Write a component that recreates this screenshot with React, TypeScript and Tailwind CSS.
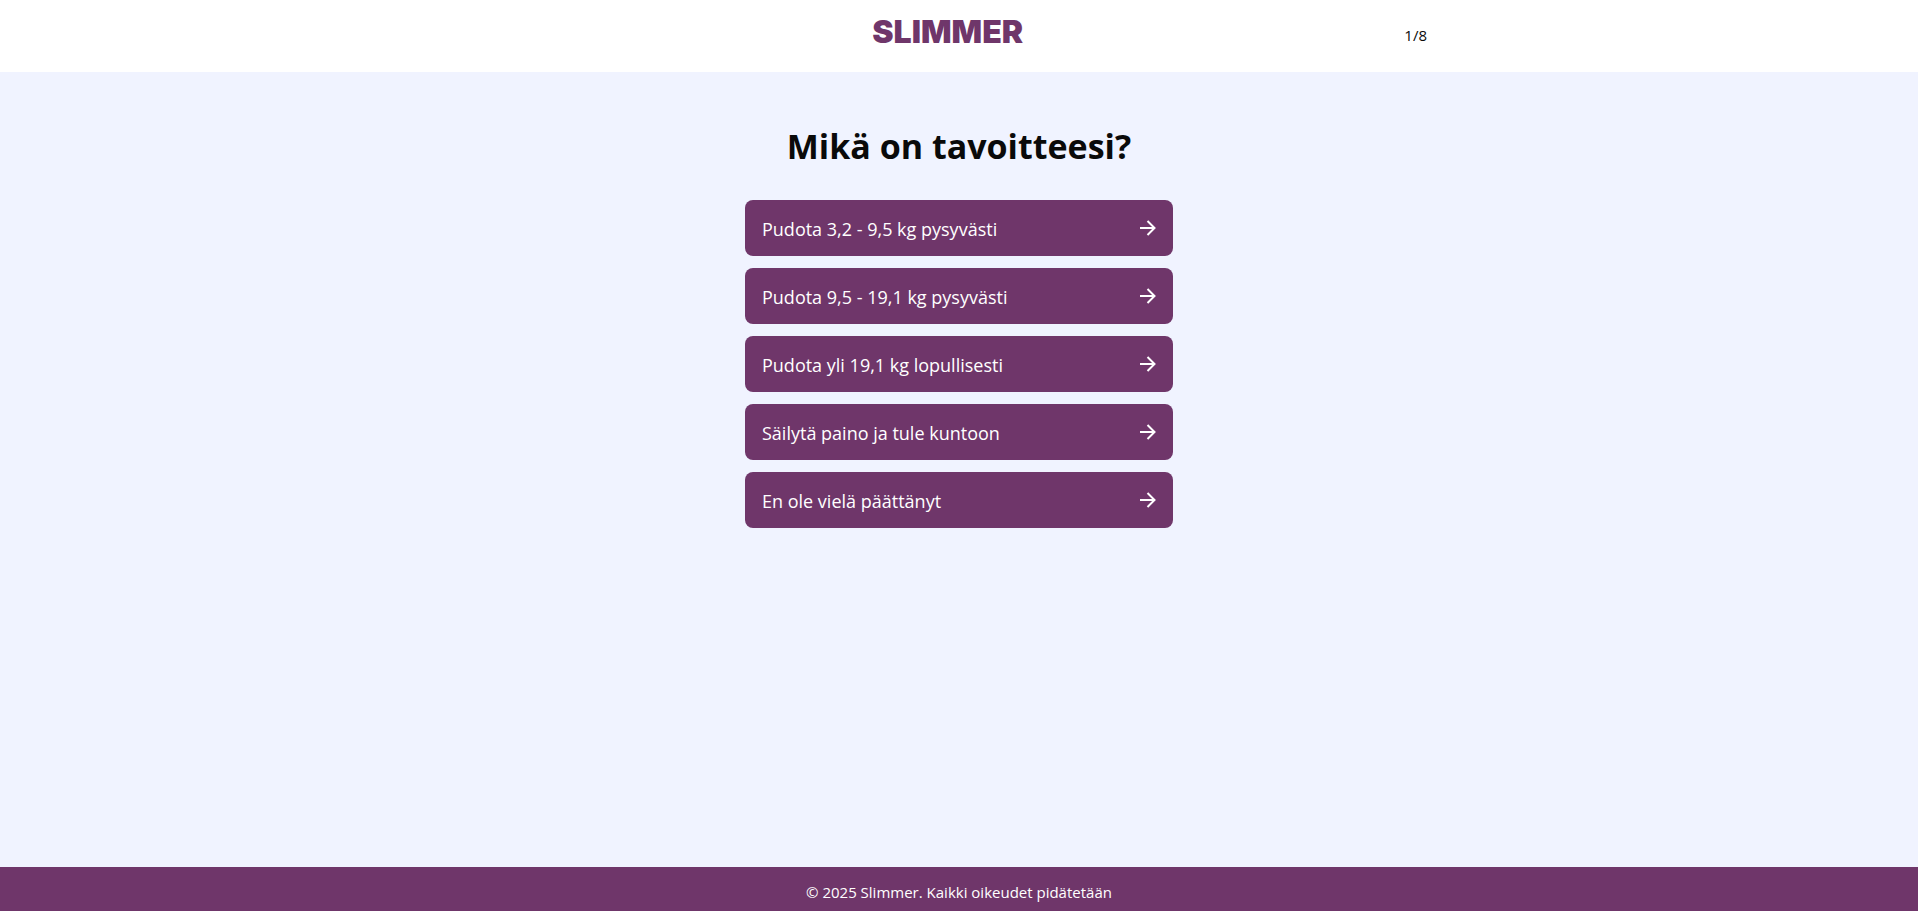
const GOALS = [
  'Pudota 3,2 - 9,5 kg pysyvästi',
  'Pudota 9,5 - 19,1 kg pysyvästi',
  'Pudota yli 19,1 kg lopullisesti',
  'Säilytä paino ja tule kuntoon',
  'En ole vielä päättänyt',
]

function ArrowIcon() {
  return (
    <svg
      className="shrink-0"
      width="16"
      height="16"
      viewBox="0 0 16 16"
      fill="none"
      stroke="currentColor"
      strokeWidth="2"
      aria-hidden="true"
    >
      <path d="M0 8h14.5M7.5 1l7 7-7 7" />
    </svg>
  )
}

function Header() {
  return (
    <header className="bg-white">
      <div className="mx-auto flex h-18 max-w-[960px] items-center justify-between px-3">
        <span />
        <a
          href="#"
          className="pb-2 font-['Inter','Liberation_Sans',sans-serif] text-[32px] leading-8 font-black text-[#6f366a]"
        >
          SLIMMER
        </a>
        <span className="pb-0.5 text-[15px]">1/8</span>
      </div>
    </header>
  )
}

function GoalButton({ label }: { label: string }) {
  return (
    <button
      type="button"
      className="flex h-14 w-full cursor-pointer items-center justify-between rounded-lg bg-[#6f366a] px-[17px] text-left text-lg text-white hover:bg-[#5c2c58]"
    >
      <span className="pt-0.5">{label}</span>
      <ArrowIcon />
    </button>
  )
}

export default function App() {
  return (
    <div className="flex min-h-screen flex-col bg-[#f0f3ff] font-['Open_Sans','Noto_Sans',sans-serif] text-[#0a0a0a]">
      <Header />

      <main className="flex-1 px-4 pt-[50px]">
        <div className="mx-auto max-w-[428px]">
          <h1 className="mb-[30px] text-center text-[34px] leading-12 font-bold">Mikä on tavoitteesi?</h1>
          <div className="flex flex-col gap-3">
            {GOALS.map((goal) => (
              <GoalButton key={goal} label={goal} />
            ))}
          </div>
        </div>
      </main>

      <footer className="bg-[#6f366a] px-4 pt-[13px] pb-[7px] text-center text-[15px] leading-6 text-white">
        © 2025 Slimmer. Kaikki oikeudet pidätetään
      </footer>
    </div>
  )
}
